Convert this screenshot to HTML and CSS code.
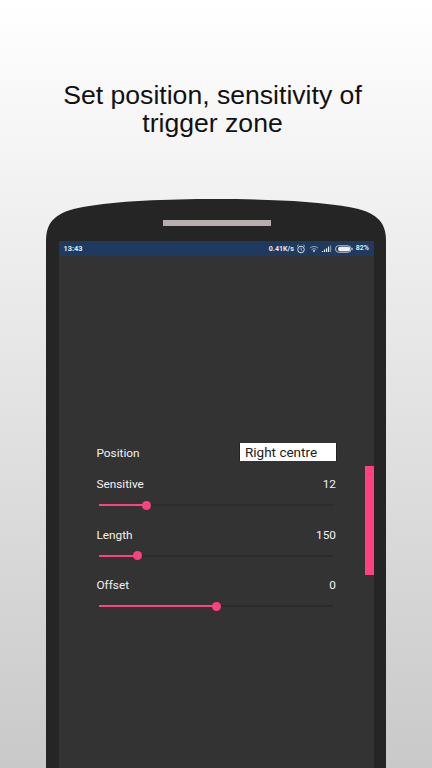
FILE: index.html
```html
<!DOCTYPE html>
<html lang="en">
<head>
<meta charset="utf-8">
<title>Trigger zone</title>
<link rel="stylesheet" href="styles.css">
</head>
<body>
<main class="page">
  <h1 class="title">Set position, sensitivity of<br>trigger zone</h1>
  <section class="phone">
    <svg class="phone-cap" viewBox="0 0 340 42" width="340" height="42" aria-hidden="true">
      <path d="M0 42C0 22 10 13 37 8C70 2 120 0 170 0C220 0 270 2 303 8C330 13 340 22 340 42Z" fill="#252525"/>
    </svg>
    <div class="speaker"></div>
    <div class="phone-body">
      <div class="screen">
        <div class="statusbar">
          <span class="clock">13:43</span>
          <div class="status-right">
            <span class="speed">0.41K/s</span>
            <svg class="ic" width="10" height="10" viewBox="0 0 10 10" aria-hidden="true">
              <circle cx="5" cy="5.5" r="3.3" fill="none" stroke="#d5dce4" stroke-width="1"/>
              <path d="M5 3.8V5.6L6.2 6.4M1 2.4L2.6 1M9 2.4L7.4 1" fill="none" stroke="#d5dce4" stroke-width=".9"/>
            </svg>
            <svg class="ic ic-wifi" width="10" height="8" viewBox="0 0 10 8" aria-hidden="true">
              <path d="M1 3C3.5 1 6.5 1 9 3M2.6 4.6C4 3.5 6 3.5 7.4 4.6" fill="none" stroke="#9fb0c2" stroke-width=".9"/>
              <path d="M3.8 5.8L5 7.2L6.2 5.8C5.5 5.2 4.5 5.2 3.8 5.8Z" fill="#e4e8ee"/>
            </svg>
            <svg class="ic ic-signal" width="10" height="8" viewBox="0 0 10 8" aria-hidden="true">
              <path d="M0 7h1.2V6H0zM2 7h1.2V4.6H2zM4 7h1.2V3.2H4zM6 7h1.2V1.6H6z" fill="#e4e8ee"/>
              <path d="M8 7h1.2V.4H8z" fill="#7f93a9"/>
            </svg>
            <svg class="ic ic-batt" width="18" height="8" viewBox="0 0 18 8" aria-hidden="true">
              <rect x=".5" y=".7" width="15.6" height="6.6" rx="3.3" fill="none" stroke="#d5dce4" stroke-width=".8"/>
              <rect x="3" y="1.8" width="12.2" height="4.4" rx="2.2" fill="#eef1f4"/>
              <rect x="16.6" y="2.8" width="1" height="2.4" fill="#d5dce4"/>
            </svg>
            <span>82%</span>
          </div>
        </div>
        <div class="panel">
          <div class="row row-position">
            <span>Position</span>
            <div class="select">Right centre</div>
          </div>
          <div class="setting">
            <div class="row"><span>Sensitive</span><span>12</span></div>
            <div class="slider"><div class="fill" style="width:20.3%"><i class="thumb"></i></div></div>
          </div>
          <div class="setting">
            <div class="row"><span>Length</span><span>150</span></div>
            <div class="slider"><div class="fill" style="width:16.5%"><i class="thumb"></i></div></div>
          </div>
          <div class="setting">
            <div class="row"><span>Offset</span><span>0</span></div>
            <div class="slider"><div class="fill" style="width:50%"><i class="thumb"></i></div></div>
          </div>
        </div>
        <div class="zone"></div>
      </div>
    </div>
  </section>
</main>
</body>
</html>
```
FILE: styles.css
```css
* { box-sizing: border-box; }
html, body { margin: 0; padding: 0; }
body { width: 432px; height: 768px; overflow: hidden; }
.page {
  height: 768px;
  padding-top: 81px;
  background: linear-gradient(180deg, #ffffff 0%, #c9c9c9 100%);
  display: flex;
  flex-direction: column;
  align-items: center;
  overflow: hidden;
}
.title {
  margin: 0 7px 0 0;
  font: 400 26.6px/28px "Liberation Sans", Arial, sans-serif;
  color: #111;
  text-align: center;
}
.phone {
  position: relative;
  width: 340px;
  margin-top: 62px;
  flex: 1;
  display: flex;
  flex-direction: column;
}
.phone-cap { display: block; flex: none; }
.speaker {
  position: absolute;
  left: 117px;
  top: 21px;
  width: 108px;
  height: 6px;
  background: #b8aeae;
}
.phone-body {
  flex: 1;
  background: #252525;
  padding: 0 12px 0 13px;
  display: flex;
}
.screen {
  position: relative;
  flex: 1;
  background: #333333;
  display: flex;
  flex-direction: column;
}
.statusbar {
  height: 15px;
  background: #1f3a5f;
  color: #e4e8ee;
  font: 700 7px/15px Roboto, sans-serif;
  display: flex;
  justify-content: space-between;
  padding: 0 5px 0 4.5px;
}
.clock { font-size: 7.4px; }
.status-right { display: flex; align-items: center; gap: 2.4px; }
.speed { font-size: 7.1px; }
.ic { display: block; flex: none; }
.ic-signal, .ic-batt { margin-left: 1px; }
.panel {
  padding: 188px 38px 0 37.5px;
  font: 400 11.8px/16px Roboto, sans-serif;
  color: #f2f2f2;
}
.row { display: flex; justify-content: space-between; align-items: center; }
.row-position { height: 18px; margin-bottom: 14px; }
.select {
  width: 98px;
  height: 18px;
  margin: -1px -1px 1px 0;
  background: #fff;
  border-left: 1px solid #222;
  border-right: 1px solid #222;
  color: #222;
  font-size: 13.5px;
  line-height: 19px;
  padding-left: 5px;
}
.setting { height: 50.6px; }
.slider {
  position: relative;
  height: 2px;
  margin: 12px 3px 0 2.5px;
  background: #2b2b2b;
}
.fill {
  position: relative;
  height: 2px;
  background: #ff4081;
}
.thumb {
  position: absolute;
  right: -4.5px;
  top: -3.5px;
  width: 9px;
  height: 9px;
  border-radius: 50%;
  background: #ff4081;
}
.zone {
  position: absolute;
  right: 0;
  top: 225px;
  width: 9px;
  height: 109px;
  background: #ff4081;
}
```
